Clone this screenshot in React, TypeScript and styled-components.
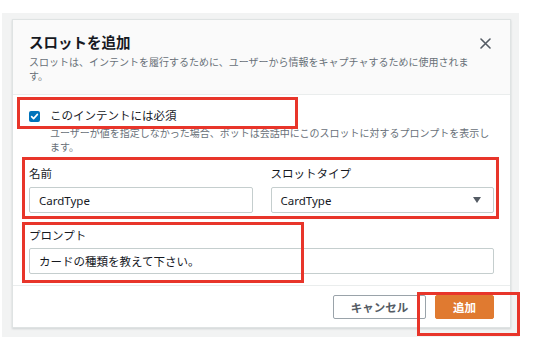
import React from "react";
import styled, { createGlobalStyle } from "styled-components";

const GlobalStyle = createGlobalStyle`
  * {
    box-sizing: border-box;
  }
  body {
    margin: 0;
    background: #ffffff;
    font-family: "Noto Sans", "Noto Sans CJK JP", sans-serif;
    color: #16191f;
  }
`;

const App: React.FC = () => {
  return (
    <Page>
      <GlobalStyle />
      <Backdrop>
        <Dialog>
          <Header>
            <HeaderText>
              <Title>スロットを追加</Title>
              <Subtitle>
                スロットは、インテントを履行するために、ユーザーから情報をキャプチャするために使用されます。
              </Subtitle>
            </HeaderText>
            <CloseButton aria-label="close">
              <svg width="11" height="11" viewBox="0 0 11 11">
                <path d="M1 1L10 10M10 1L1 10" stroke="#545b64" strokeWidth="1.6" strokeLinecap="round" />
              </svg>
            </CloseButton>
          </Header>
          <Body>
            <CheckRow>
              <CheckBox>
                <svg width="9" height="9" viewBox="0 0 9 9">
                  <path d="M1.6 4.6L3.6 6.6L7.4 2.4" stroke="#fff" strokeWidth="1.6" fill="none" strokeLinecap="round" strokeLinejoin="round" />
                </svg>
              </CheckBox>
              <CheckLabel>このインテントには必須</CheckLabel>
            </CheckRow>
            <Description>
              ユーザーが値を指定しなかった場合、ボットは会話中にこのスロットに対するプロンプトを表示します。
            </Description>
            <FieldRow>
              <Field>
                <Label>名前</Label>
                <Input>CardType</Input>
              </Field>
              <Field>
                <Label>スロットタイプ</Label>
                <Input>
                  CardType
                  <svg width="8" height="6" viewBox="0 0 8 6">
                    <path d="M0 0H8L4 6Z" fill="#545b64" />
                  </svg>
                </Input>
              </Field>
            </FieldRow>
            <Field $spaced>
              <Label>プロンプト</Label>
              <Input>カードの種類を教えて下さい。</Input>
            </Field>
          </Body>
          <Footer>
            <Button>キャンセル</Button>
            <Button $primary>追加</Button>
          </Footer>
        </Dialog>
      </Backdrop>
      <Annotation style={{ left: 17, top: 97, width: 281, height: 32 }} />
      <Annotation style={{ left: 22, top: 157, width: 477, height: 62 }} />
      <Annotation style={{ left: 22, top: 222, width: 282, height: 61 }} />
      <Annotation style={{ left: 417, top: 292, width: 103, height: 44 }} />
    </Page>
  );
};

const Page = styled.div`
  position: relative;
  width: 536px;
  height: 360px;
  padding: 13px 0 0 2px;
  background: #ffffff;
  overflow: hidden;
`;

const Backdrop = styled.div`
  width: 517px;
  height: 324px;
  padding: 6px 0 0 10px;
  background: #f2f3f3;
`;

const Dialog = styled.div`
  width: 499px;
  background: #ffffff;
  border: 1px solid #dfe3e3;
  box-shadow: 0 1px 2px rgba(0, 28, 36, 0.15);
`;

const Header = styled.div`
  display: flex;
  align-items: flex-start;
  padding: 12px 16px 11px 16px;
  background: #fafafa;
  border-bottom: 1px solid #eaeded;
`;

const HeaderText = styled.div`
  flex: 1;
  max-width: 446px;
`;

const Title = styled.h2`
  margin: 0;
  font-size: 14.5px;
  line-height: 20px;
  font-weight: 700;
  color: #16191f;
`;

const Subtitle = styled.p`
  margin: 3px 0 0;
  font-size: 10px;
  line-height: 14px;
  color: #687078;
`;

const CloseButton = styled.button`
  margin: 6px 3px 0 auto;
  padding: 0;
  border: none;
  background: none;
  display: flex;
`;

const Body = styled.div`
  padding: 13px 16px 11px;
`;

const CheckRow = styled.div`
  display: flex;
  align-items: center;
  gap: 10px;
  height: 16px;
`;

const CheckBox = styled.span`
  width: 11px;
  height: 11px;
  border-radius: 2px;
  background: #0073bb;
  display: flex;
  align-items: center;
  justify-content: center;
`;

const CheckLabel = styled.span`
  font-size: 11.5px;
  line-height: 16px;
  color: #16191f;
`;

const Description = styled.p`
  margin: 2px 0 0 21px;
  font-size: 10px;
  line-height: 14px;
  color: #687078;
`;

const FieldRow = styled.div`
  display: grid;
  grid-template-columns: 1fr 1fr;
  gap: 18px;
  margin-top: 12px;
`;

const Field = styled.div<{ $spaced?: boolean }>`
  display: flex;
  flex-direction: column;
  gap: ${({ $spaced }) => ($spaced ? "4px" : "5px")};
  margin-top: ${({ $spaced }) => ($spaced ? "15px" : "0")};
`;

const Label = styled.span`
  font-size: 11.5px;
  line-height: 16px;
  font-weight: 400;
  color: #16191f;
`;

const Input = styled.div`
  height: 26px;
  display: flex;
  align-items: center;
  justify-content: space-between;
  padding: 0 12px 0 9px;
  border: 1px solid #c5cece;
  border-radius: 2px;
  background: #ffffff;
  font-size: 11.5px;
  color: #16191f;
`;

const Footer = styled.div`
  display: flex;
  justify-content: flex-end;
  gap: 9px;
  padding: 9px 16px 8px;
  border-top: 1px solid #eaeded;
`;

const Button = styled.button<{ $primary?: boolean }>`
  height: 24px;
  padding: 0;
  width: ${({ $primary }) => ($primary ? "59px" : "93px")};
  border-radius: 2px;
  border: 1px solid ${({ $primary }) => ($primary ? "#e07a30" : "#9aa3aa")};
  background: ${({ $primary }) => ($primary ? "#e07a30" : "#ffffff")};
  color: ${({ $primary }) => ($primary ? "#ffffff" : "#545b64")};
  font-family: "Noto Sans", "Noto Sans CJK JP", sans-serif;
  font-size: 11.5px;
  font-weight: 700;
`;

const Annotation = styled.div`
  position: absolute;
  border: 3px solid #e8352a;
  pointer-events: none;
`;

export default App;
